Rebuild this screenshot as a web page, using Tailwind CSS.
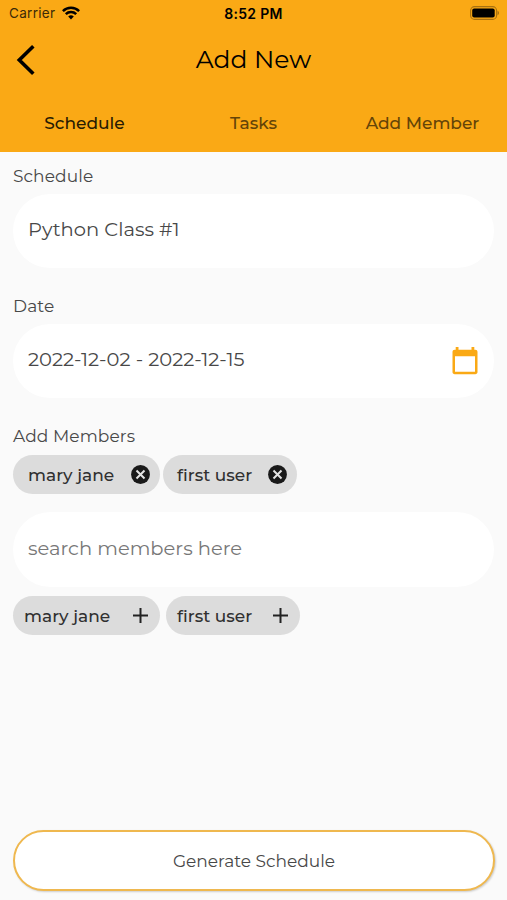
<!DOCTYPE html>
<html lang="en">
<head>
<meta charset="utf-8">
<title>Add New</title>
<script src="https://cdn.jsdelivr.net/npm/@tailwindcss/browser@4"></script>
</head>
<body class="bg-[#fafafa]">
<div class="flex h-[900px] w-[507px] flex-col overflow-hidden bg-[#fafafa] font-[Montserrat,Inter,sans-serif] text-[#484848] whitespace-nowrap">
  <header class="h-[152px] shrink-0 bg-[#faa915] text-black">
    <div class="grid h-[27px] grid-cols-3 items-center px-[9px] font-[Inter,sans-serif] text-[13.5px] leading-[27px]">
      <div class="flex items-center gap-[7px] text-[#3c2a08]"><span class="tracking-[0.3px]">Carrier</span>
        <svg class="mb-[1px] h-[14px] w-[18px]" viewBox="0 0 18 14" fill="none" stroke="#000" stroke-width="2.5"><path d="M.9 5.1a11.6 11.6 0 0 1 16.2 0M3.8 8.2a7.4 7.4 0 0 1 10.4 0"/><path d="M9 13.5 6.2 10.6a4 4 0 0 1 5.6 0z" fill="#000" stroke="none"/></svg>
      </div>
      <div class="text-center text-[14px] font-semibold tracking-[0.3px]">8:52 PM</div>
      <svg class="mr-[-2px] mb-[1px] h-[14px] w-[31px] justify-self-end" viewBox="0 0 31 14"><rect x="1.6" y=".6" width="26" height="12.8" rx="4" fill="none" stroke="#a87110" stroke-width="1.1"/><rect x="3.2" y="2.6" width="22.5" height="8.8" rx="2" fill="#000"/><path d="M28.500 4.800c2 .7 2 3.700 0 4.400z" fill="#a87110"/></svg>
    </div>
    <div class="grid h-[66px] grid-cols-[60px_1fr_60px] items-center">
      <svg class="ml-[15px] h-[32px] w-[22px]" viewBox="0 0 22 32" fill="none" stroke="#000" stroke-width="3.6"><path d="M18.300 2.300 4.300 16l14 13.700"/></svg>
      <h1 class="text-center text-[25px]">Add New</h1>
    </div>
    <nav class="grid h-[61px] grid-cols-3 items-center text-center text-[17px] font-medium text-[#644408]">
      <span class="text-[#281b03]">Schedule</span><span>Tasks</span><span>Add Member</span>
    </nav>
  </header>
  <main class="flex flex-1 flex-col px-[13px]">
    <label class="mt-[11px] h-[26px] text-[17px] leading-[26px] tracking-[0.1px]">Schedule</label>
    <div class="mt-[5px] flex h-[74px] items-center rounded-full bg-white px-[15px] pb-[2px] text-[19.5px]">Python Class #1</div>
    <label class="mt-[25px] h-[26px] text-[17px] leading-[26px] tracking-[0.1px]">Date</label>
    <div class="mt-[5px] flex h-[74px] items-center justify-between rounded-full bg-white pr-[16px] pl-[15px] text-[19.5px]"><span class="pb-[2px]">2022-12-02 - 2022-12-15</span>
      <svg class="h-[28px] w-[26px]" viewBox="0 0 26 28"><path fill="#faa915" fill-rule="evenodd" d="M3.700 0h2.800v2.700h13V0h2.800v2.700h1c1.300 0 2.200.9 2.200 2.200v20.200c0 1.300-.9 2.200-2.200 2.200H2.700C1.400 27.300.5 26.400.5 25.100V4.900c0-1.300.9-2.200 2.200-2.200h1zM3 9.200v15.600h20V9.200z"/></svg>
    </div>
    <label class="mt-[25px] h-[26px] text-[17px] leading-[26px] tracking-[0.1px]">Add Members</label>
    <div class="mt-[6px] flex h-[39px] gap-[3px] text-[17px] font-medium text-[#303030]">
      <div class="flex w-[147px] items-center justify-between rounded-full bg-[#dcdcdc] pr-[10px] pl-[15px]"><span class="pt-[2px]">mary jane</span>
        <svg class="size-[19px]" viewBox="0 0 19 19"><circle cx="9.500" cy="9.500" r="9.400" fill="#191919"/><path d="m5.500 5.500 8 8m0-8-8 8" stroke="#e4e4e4" stroke-width="2"/></svg></div>
      <div class="flex w-[134px] items-center justify-between rounded-full bg-[#dcdcdc] pr-[10px] pl-[14px]"><span class="pt-[2px]">first user</span>
        <svg class="size-[19px]" viewBox="0 0 19 19"><circle cx="9.500" cy="9.500" r="9.400" fill="#191919"/><path d="m5.500 5.500 8 8m0-8-8 8" stroke="#e4e4e4" stroke-width="2"/></svg></div>
    </div>
    <div class="mt-[18px] flex h-[75px] items-center rounded-full bg-white px-[15px] pb-[2px] text-[19.5px] text-[#777]">search members here</div>
    <div class="mt-[9px] flex h-[39px] gap-[6px] text-[17px] font-medium text-[#303030]">
      <div class="flex w-[147px] items-center justify-between rounded-full bg-[#dcdcdc] pr-[12px] pl-[11px]"><span class="pt-[2px]">mary jane</span>
        <svg class="size-[15px]" viewBox="0 0 15 15"><path d="M7.500 0v15M0 7.500h15" stroke="#222" stroke-width="2"/></svg></div>
      <div class="flex w-[134px] items-center justify-between rounded-full bg-[#dcdcdc] pr-[12px] pl-[11px]"><span class="pt-[2px]">first user</span>
        <svg class="size-[15px]" viewBox="0 0 15 15"><path d="M7.500 0v15M0 7.500h15" stroke="#222" stroke-width="2"/></svg></div>
    </div>
    <button class="mt-auto mb-[9px] h-[61px] w-[482px] shrink-0 rounded-full border-2 border-[#efb84f] bg-white pt-[2px] text-[17px] shadow-[1px_1px_2px_rgba(0,0,0,0.18)]">Generate Schedule</button>
  </main>
</div>
</body>
</html>
